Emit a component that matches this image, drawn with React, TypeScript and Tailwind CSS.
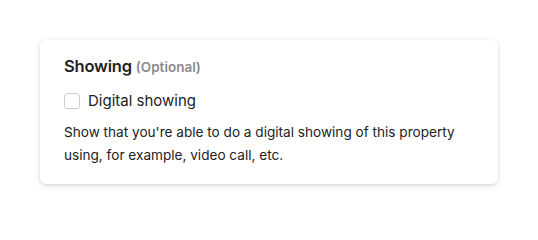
export default function App() {
  return (
    <div className="min-h-screen bg-white p-10" style={{ fontFamily: 'Inter, "Liberation Sans", sans-serif' }}>
      <div className="rounded-md bg-white px-6 pt-[14px] pb-[17px] shadow-[0_1px_3px_rgba(0,0,0,0.12),0_2px_8px_rgba(0,0,0,0.08)]">
        <h3 className="text-[16.5px] font-semibold leading-6 tracking-[-0.2px] text-[#222]">
          Showing <span className="text-[13.5px] font-semibold tracking-normal text-[#8a8a8a]">(Optional)</span>
        </h3>
        <label className="mt-[10px] flex items-center gap-[8px]">
          <span className="block h-4 w-4 rounded-[3px] border border-[#cfcfcf] bg-white" />
          <span className="text-[15px] leading-6 text-[#222]">Digital showing</span>
        </label>
        <p className="mt-[8px] text-[13.6px] leading-[23px] text-[#222]">
          Show that you're able to do a digital showing of this property using, for example, video call, etc.
        </p>
      </div>
    </div>
  );
}
